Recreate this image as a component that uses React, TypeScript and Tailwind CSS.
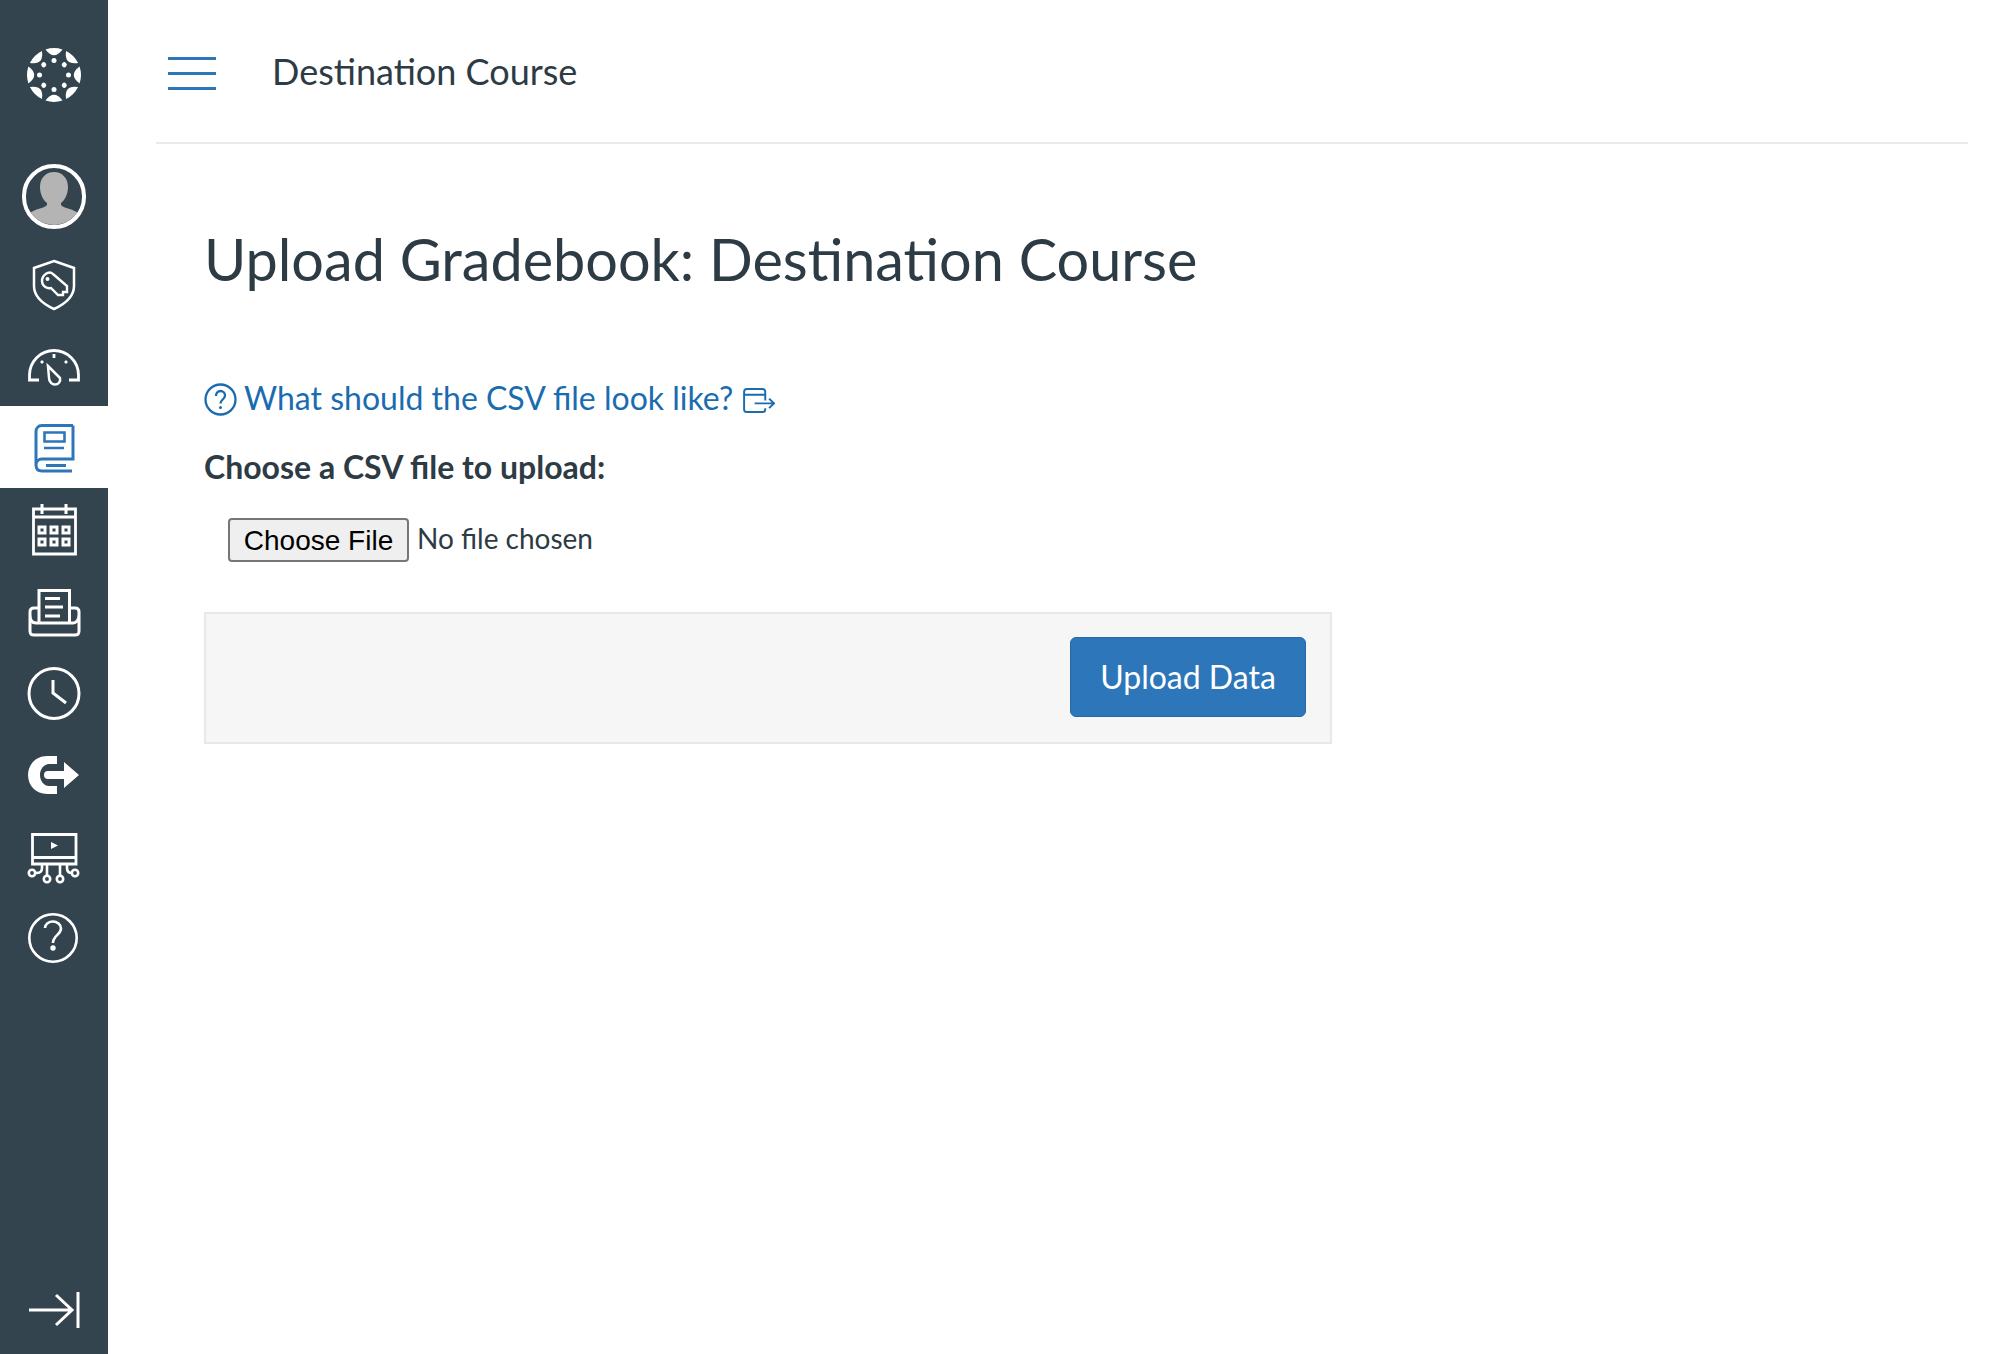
import React from "react";

const white = "#ffffff";

function NavIcon({ children, active }: { children: React.ReactNode; active?: boolean }) {
  return (
    <div className={active ? "h-[82px] w-[108px] bg-white" : "h-[82px] w-[108px]"}>
      <svg className="block" width="108" height="82" viewBox="0 0 108 82" fill="none" stroke={active ? "#2d76b9" : white} strokeWidth="3">
        {children}
      </svg>
    </div>
  );
}

function CanvasLogo() {
  const spokes = [0, 45, 90, 135, 180, 225, 270, 315];
  return (
    <svg className="block" width="56" height="56" viewBox="-28 -28 56 56" fill={white}>
      {spokes.map((a) => (
        <g key={a} transform={`rotate(${a})`}>
          <path d="M-8.500 -25.600A27 27 0 0 1 8.500 -25.600Q0 -14 -8.500 -25.600Z" />
          <circle cx="0" cy="-14.500" r="2.500" />
        </g>
      ))}
    </svg>
  );
}

export default function App() {
  return (
    <div className="flex min-h-[1354px] bg-white text-[#2d3b45] [font-family:Lato,'Liberation_Sans',sans-serif]">
      <aside className="flex h-[1354px] w-[108px] shrink-0 flex-col items-center bg-[#34444f]">
        <div className="flex h-[163px] w-full items-start justify-center pt-[47px]">
          <CanvasLogo />
        </div>
        <div className="flex h-[67px] w-full items-center justify-center">
          <div className="h-[65px] w-[64px] overflow-hidden rounded-full border-[4px] border-white">
            <svg className="block" width="56" height="57" viewBox="0 0 56 57" fill="#b4b4b4">
              <path d="M28 4c8 0 14 6 14 15 0 7-3 13-7 16v2c3 4 12 3 18 9v11H3V46c6-6 15-5 18-9v-2c-4-3-7-9-7-16 0-9 6-15 14-15Z" />
            </svg>
          </div>
        </div>
        <div className="flex h-[88px] w-full items-start justify-center pt-[29px]">
          <svg className="block" width="44" height="52" viewBox="0 0 44 52" fill="none" stroke={white} strokeWidth="2.500">
            <path d="M22 2 42 9v18c0 10-9 18-20 23C11 45 2 37 2 27V9Z" />
            <path d="M21 15 35 27v6h-4v3h-5L19 29c-4 1-9-2-9-7 0-6 7-11 11-7Z" strokeWidth="2.400" />
            <circle cx="15.500" cy="20" r="2" fill={white} stroke="none" />
          </svg>
        </div>
        <div className="h-[88px] w-full">
          <svg className="block" width="108" height="88" viewBox="0 0 108 88" fill="none" stroke={white} strokeWidth="2.800">
            <path d="M39 62H29.500V57A24.500 24.500 0 0 1 78.500 57V62H69" />
            <path d="M54 36v4M41 43l2 2M67 43l-2 2" />
            <path d="M48 48 60 60c1 4-2 6.500-5 6.500s-6-3-6-6.500Z" strokeWidth="2.500" />
          </svg>
        </div>
        <NavIcon active>
          <path d="M73 19.500H42c-4 0-6 3-6 6V59c0 4 2 6 6 6h30M36 59c0-4 3-6 6-6h31V19.500M46 59.500h20" />
          <path d="M44.500 26.500h20v9h-20ZM44 42h20" strokeWidth="2.600" />
        </NavIcon>
        <NavIcon>
          <path d="M33.500 21h42v45h-42ZM33.500 29h42" strokeWidth="2.800" />
          <path d="M42 16v10M66 16v10" strokeWidth="3" />
          <path d="M39 39h6v6h-6ZM51 39h6v6h-6ZM63 39h6v6h-6ZM39 51h6v6h-6ZM51 51h6v6h-6ZM63 51h6v6h-6Z" />
        </NavIcon>
        <NavIcon>
          <path d="M39 53V20.500h30.500V53" />
          <path d="M45 28.500h15M45 37h18M45 46h15" />
          <path d="M38 38h-4c-3 0-4 2-4 4v19c0 3 1 4 4 4h41c3 0 4-1 4-4V42c0-2-1-4-4-4h-5M30 45c0 5 2 8 6 8h37c3 0 6-3 6-8" />
        </NavIcon>
        <NavIcon>
          <circle cx="54" cy="41.500" r="25" />
          <path d="M53 28v13l13 10" />
        </NavIcon>
        <div className="flex h-[82px] w-full items-center justify-center">
          <svg className="block" width="52" height="38" viewBox="0 0 52 38" fill={white}>
            <path d="M29 0H19C8 0 0 8.500 0 19s8 19 19 19h10v-8H21c-5 0-9-5-9-11s4-11 9-11h8Z" />
            <path d="M36 6 51 19 36 32V23H20a4 4 0 0 1 0-8H36Z" />
          </svg>
        </div>
        <NavIcon>
          <path d="M32.500 18.500h43.500v29.500h-43.500ZM32.500 41.500h43.500" strokeWidth="2.800" />
          <path d="m51 26 7 3.500-7 3.500Z" fill={white} stroke="none" />
          <path d="M42 48v4c0 4-2 5-6 5M47 48v12M60 48v12M67 48v4c0 4 2 5 5 5" strokeWidth="2.600" />
          <circle cx="32" cy="57" r="3.200" strokeWidth="2.600" />
          <circle cx="47" cy="63" r="3.200" strokeWidth="2.600" />
          <circle cx="60" cy="63" r="3.200" strokeWidth="2.600" />
          <circle cx="75" cy="57" r="3.200" strokeWidth="2.600" />
        </NavIcon>
        <NavIcon>
          <circle cx="53" cy="40" r="23.700" strokeWidth="2.600" />
          <path d="M45 30c0-4 4-6.500 8-6.500s8 3 8 7c0 6-8 7-8 14.500" strokeWidth="2.600" />
          <circle cx="53" cy="50" r="2.700" fill={white} stroke="none" />
        </NavIcon>
        <div className="mt-auto h-[70px] w-full">
          <svg className="block" width="108" height="70" viewBox="0 0 108 70" fill="none" stroke={white} strokeWidth="3">
            <path d="M29 26h43M56 11l16 15-16 15M78 8v36" />
          </svg>
        </div>
      </aside>
      <main className="min-w-0 flex-1 pl-[48px] pr-[48px]">
        <header className="flex h-[144px] items-start border-b-2 border-[#e8eaec] pt-[57px]">
          <div className="ml-[12px] flex h-[33px] w-[48px] flex-col justify-between">
            <div className="h-[3px] bg-[#2d76b9]" />
            <div className="h-[3px] bg-[#2d76b9]" />
            <div className="h-[3px] bg-[#2d76b9]" />
          </div>
          <div className="ml-[56px] mt-[-8px] text-[36px] leading-[44px]">Destination Course</div>
        </header>
        <div className="pl-[48px]">
          <h1 className="mt-[79px] text-[57.6px] font-normal leading-[72px]">Upload Gradebook: Destination Course</h1>
          <a className="mt-[81px] flex h-[44px] items-center text-[32px] text-[#1a6caf]">
            <svg className="mr-[7px] mt-[2px]" width="33" height="33" viewBox="0 0 33 33" fill="none" stroke="#1a6caf" strokeWidth="2.300">
              <circle cx="16.500" cy="16.500" r="15" />
              <path d="M12 13c0-3 2-5 4.500-5s4.500 2 4.500 4.500c0 4-4.500 4-4.500 8" />
              <circle cx="16.500" cy="24.500" r="1.500" fill="#1a6caf" stroke="none" />
            </svg>
            What should the CSV file look like?
            <svg className="ml-[10px] mt-[4px]" width="32" height="25" viewBox="0 0 33 26" fill="none" stroke="#1a6caf" strokeWidth="2">
              <path d="M23 13V4c0-2-1-3-3-3H4C2 1 1 2 1 4v18c0 2 1 3 3 3h16c2 0 3-1 3-3v-1M1 7h22M12 16h20M27 11l5 5-5 5" />
            </svg>
          </a>
          <div className="mt-[27px] text-[32px] font-bold leading-[40px]">Choose a CSV file to upload:</div>
          <div className="mt-[30px] flex items-center pl-[24px]">
            <button className="h-[44px] w-[181px] rounded-[4px] border-2 border-[#767676] bg-[#efefef] pb-[6px] text-[28px] text-black [font-family:'Liberation_Sans',sans-serif]">Choose File</button>
            <span className="mb-[3px] ml-[8px] text-[28px]">No file chosen</span>
          </div>
          <div className="mt-[50px] flex h-[132px] w-[1128px] items-center justify-end border-2 border-[#e8e8e8] bg-[#f6f6f6] pb-[2px] pr-[24px]">
            <button className="h-[80px] w-[236px] rounded-[6px] border border-[#2769a3] bg-[#2d76b9] text-[32px] text-white">Upload Data</button>
          </div>
        </div>
      </main>
    </div>
  );
}
